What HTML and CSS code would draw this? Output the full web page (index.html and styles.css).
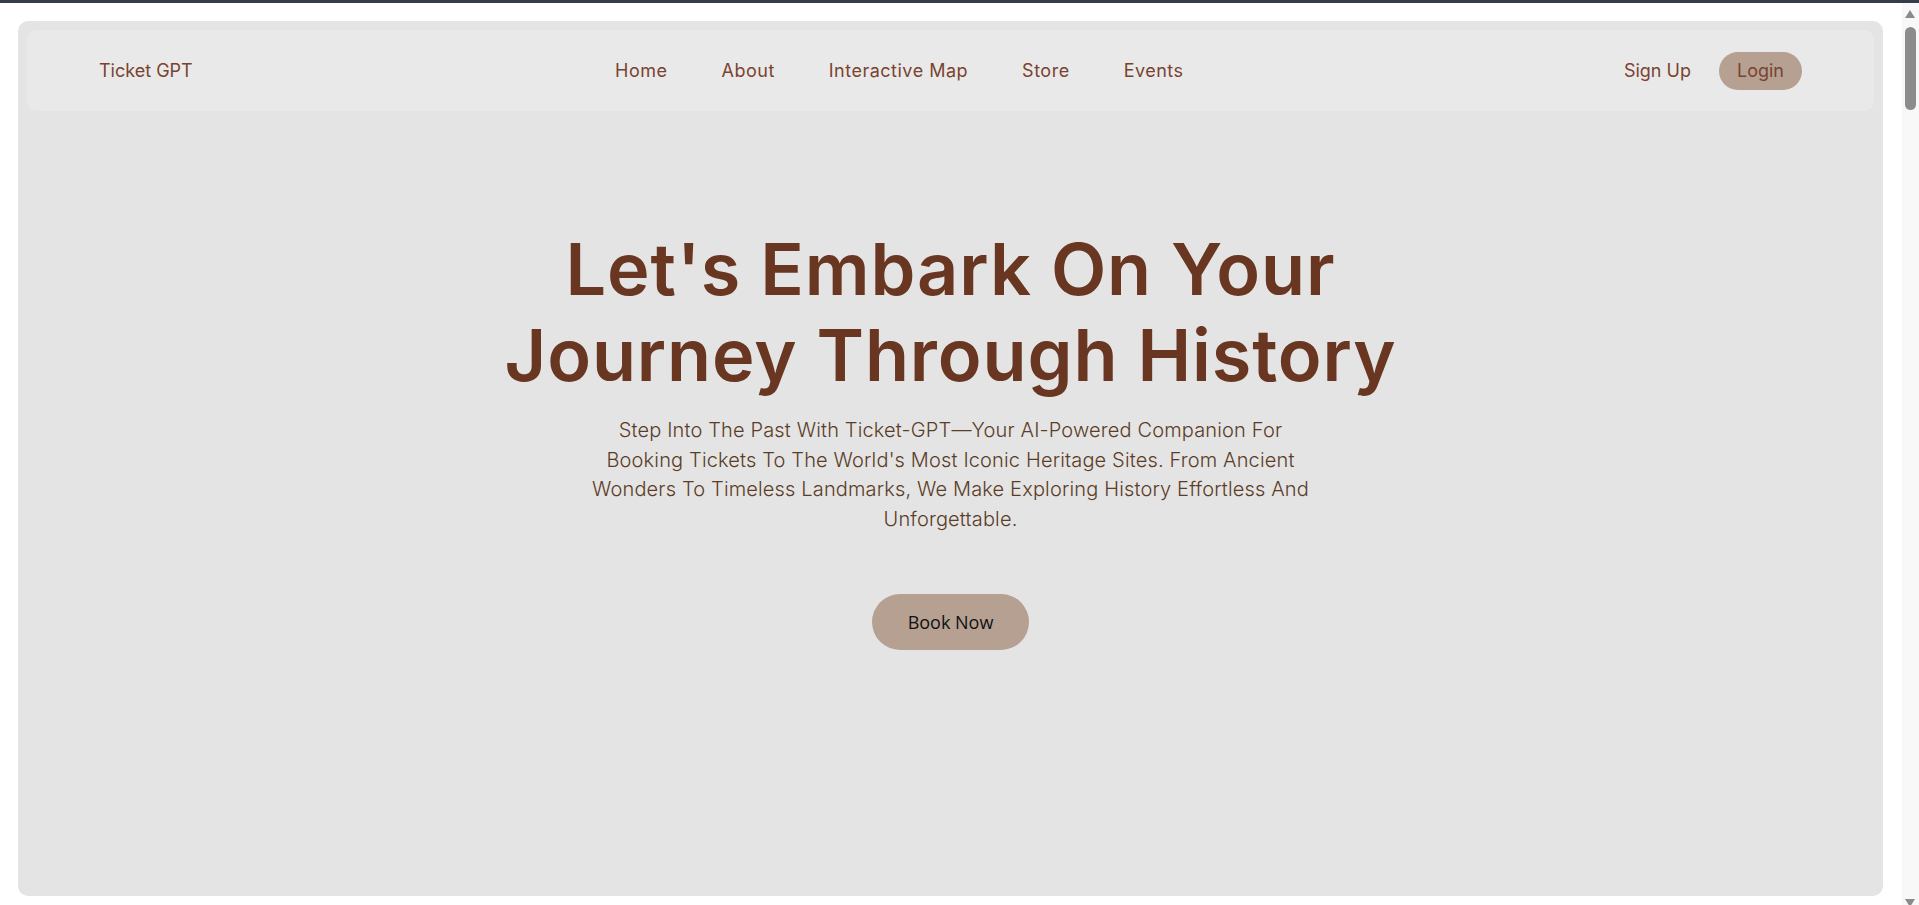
FILE: index.html
```html
<!DOCTYPE html>
<html lang="en">
<head>
<meta charset="utf-8">
<title>Ticket GPT</title>
<link rel="stylesheet" href="styles.css">
</head>
<body>
<div class="topline"></div>
<main class="page">
  <section class="hero-card">
    <header class="nav">
      <a class="brand" href="#">Ticket GPT</a>
      <nav class="links">
        <a href="#">Home</a>
        <a href="#">About</a>
        <a href="#">Interactive Map</a>
        <a href="#">Store</a>
        <a href="#">Events</a>
      </nav>
      <div class="auth">
        <a class="auth-btn" href="#">Sign Up</a>
        <a class="auth-btn login" href="#">Login</a>
      </div>
    </header>
    <div class="hero">
      <h1 class="title">Let's Embark On Your<br>Journey Through History</h1>
      <p class="lead">Step Into The Past With Ticket-GPT—Your AI-Powered Companion For Booking Tickets To The World's Most Iconic Heritage Sites. From Ancient Wonders To Timeless Landmarks, We Make Exploring History Effortless And Unforgettable.</p>
      <button class="cta" type="button">Book Now</button>
    </div>
  </section>
  <section class="rest"></section>
</main>
<div class="scrollbar" aria-hidden="true">
  <span class="sb-up"></span>
  <span class="sb-thumb"></span>
  <span class="sb-down"></span>
</div>
</body>
</html>
```
FILE: styles.css
```css
* { box-sizing: border-box; }
html, body { margin: 0; padding: 0; }
body {
  background: #ffffff;
  font-family: "Inter", "Open Sans", sans-serif;
}
.topline { height: 3px; background: #363c49; }
.page { padding: 18px 36px 0 18px; }
.hero-card {
  height: 875px;
  background: #e4e4e4;
  border-radius: 10px;
  padding: 9px;
  display: flex;
  flex-direction: column;
}
.nav {
  height: 81px;
  background: #e9e9e9;
  border-radius: 10px;
  padding: 0 72px;
  display: flex;
  align-items: center;
  justify-content: space-between;
}
.nav a { text-decoration: none; color: #7a4330; font-size: 18px; }
.links { display: flex; gap: 54px; }
.links a { letter-spacing: 0.5px; }
.auth { display: flex; gap: 10px; align-items: center; }
.auth-btn { padding: 7px 18px; border-radius: 20px; line-height: 24px; }
.login { background: #b5a092; }
.hero {
  display: flex;
  flex-direction: column;
  align-items: center;
  text-align: center;
  padding-top: 115px;
}
.title {
  margin: 0;
  font-size: 72px;
  font-weight: 600;
  line-height: 86px;
  letter-spacing: 0.9px;
  color: #683621;
}
.lead {
  margin: 18px 0 0;
  width: 740px;
  font-size: 20px;
  font-weight: 300;
  line-height: 29.5px;
  letter-spacing: 0.15px;
  color: #5b3d27;
}
.cta {
  margin-top: 60px;
  width: 157px;
  height: 56px;
  border: none;
  border-radius: 28px;
  background: #b5a092;
  color: #111111;
  font-family: "Open Sans", sans-serif;
  font-size: 18px;
}
.rest { height: 8600px; }

.scrollbar {
  position: fixed;
  top: 3px;
  right: 0;
  width: 17px;
  bottom: 0;
  background: #f8f8f8;
}
.sb-up, .sb-down, .sb-thumb { position: absolute; display: block; }
.sb-up {
  top: 7px;
  left: 3px;
  border-left: 5.5px solid transparent;
  border-right: 5.5px solid transparent;
  border-bottom: 8px solid #8a8a8a;
}
.sb-thumb {
  top: 24px;
  left: 3px;
  width: 11px;
  height: 83px;
  border-radius: 6px;
  background: #8c8c8c;
}
.sb-down {
  bottom: -2px;
  left: 3px;
  border-left: 5.5px solid transparent;
  border-right: 5.5px solid transparent;
  border-top: 8px solid #8a8a8a;
}
```
